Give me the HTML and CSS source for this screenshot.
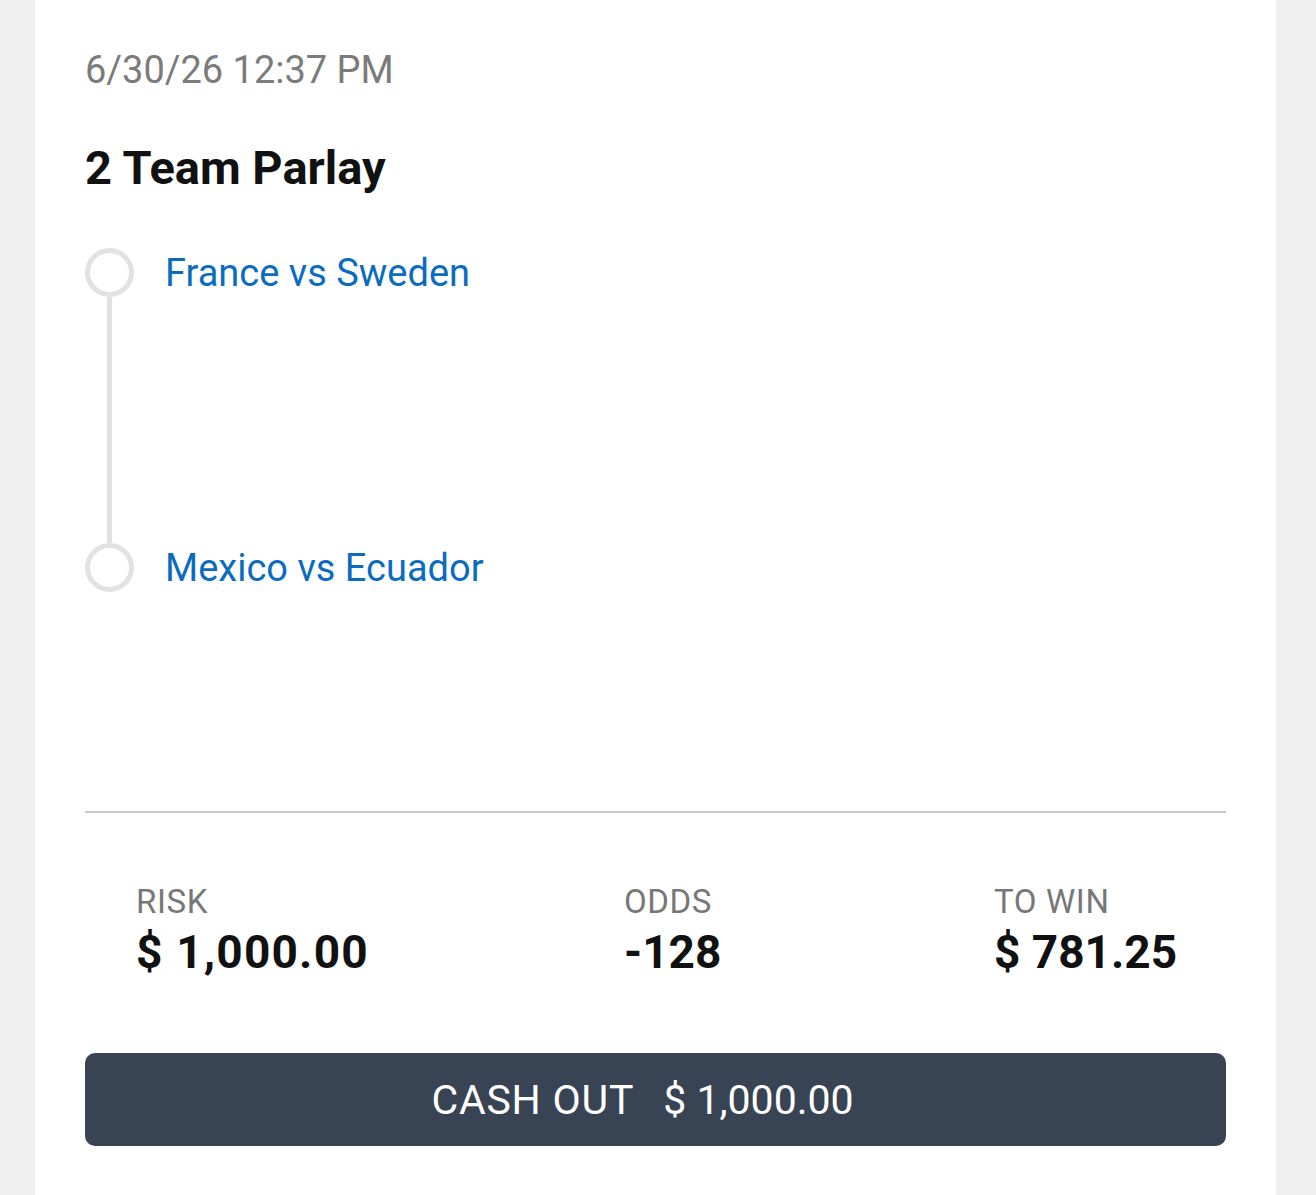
FILE: index.html
```html
<!DOCTYPE html>
<html lang="en">
<head>
<meta charset="utf-8">
<title>2 Team Parlay</title>
<link rel="stylesheet" href="styles.css">
</head>
<body>
<main class="card">
  <div class="date">6/30/26 12:37 PM</div>
  <h1 class="title">2 Team Parlay</h1>
  <section class="legs">
    <div class="leg leg-first">
      <div class="marker"><span class="dot"></span><span class="line"></span></div>
      <div class="leg-body"><div class="match">France vs Sweden</div></div>
    </div>
    <div class="leg leg-last">
      <div class="marker"><span class="dot"></span></div>
      <div class="leg-body"><div class="match">Mexico vs Ecuador</div></div>
    </div>
  </section>
  <hr class="divider">
  <section class="stats">
    <div class="stat"><div class="label">RISK</div><div class="value value-wide">$ 1,000.00</div></div>
    <div class="stat"><div class="label">ODDS</div><div class="value">-128</div></div>
    <div class="stat"><div class="label">TO WIN</div><div class="value">$ 781.25</div></div>
  </section>
  <button class="cashout"><span class="co-label">CASH OUT</span><span>$ 1,000.00</span></button>
</main>
</body>
</html>
```
FILE: styles.css
```css
html, body {
  margin: 0;
  padding: 0;
}
body {
  background: #efefef;
  font-family: Roboto, "Liberation Sans", sans-serif;
  min-height: 1195px;
}
.card {
  margin: 0 40px 0 35px;
  background: #ffffff;
  min-height: 1195px;
  box-sizing: border-box;
  padding: 47px 50px 0 50px;
  display: flex;
  flex-direction: column;
}
.date {
  font-size: 38px;
  line-height: 46px;
  color: #7b7b7b;
}
.title {
  margin: 49px 0 0 0;
  font-size: 47px;
  line-height: 52px;
  font-weight: 700;
  color: #111111;
}
.legs {
  margin-top: 54px;
  display: flex;
  flex-direction: column;
}
.leg {
  display: flex;
  gap: 31px;
}
.leg-first {
  height: 295px;
}
.leg-last {
  height: 240px;
}
.marker {
  width: 49px;
  display: flex;
  flex-direction: column;
  align-items: center;
}
.dot {
  width: 39px;
  height: 39px;
  border: 5px solid #e2e2e2;
  border-radius: 50%;
  flex: none;
}
.line {
  width: 5px;
  flex: 1;
  background: #e2e2e2;
}
.leg-body {
  padding-top: 2px;
}
.match {
  font-size: 38px;
  line-height: 46px;
  color: #0b6cbf;
}
.divider {
  margin: 28px 0 0 0;
  border: none;
  height: 2px;
  background: #c9c9c9;
}
.stats {
  margin-top: 70px;
  padding-left: 51px;
  display: grid;
  grid-template-columns: 488px 370px 1fr;
}
.label {
  font-size: 33px;
  line-height: 38px;
  letter-spacing: 0.6px;
  color: #777777;
}
.value {
  margin-top: 5px;
  font-size: 46px;
  line-height: 52px;
  font-weight: 700;
  color: #111111;
}
.value-wide {
  letter-spacing: 1.2px;
}
.cashout {
  margin-top: 75px;
  height: 93px;
  border: none;
  border-radius: 10px;
  background: #384454;
  color: #ffffff;
  font-family: inherit;
  font-size: 41px;
  display: flex;
  align-items: center;
  justify-content: center;
  gap: 29px;
  padding: 0 26px 0 0;
}
.co-label {
  letter-spacing: 0.8px;
}
```
